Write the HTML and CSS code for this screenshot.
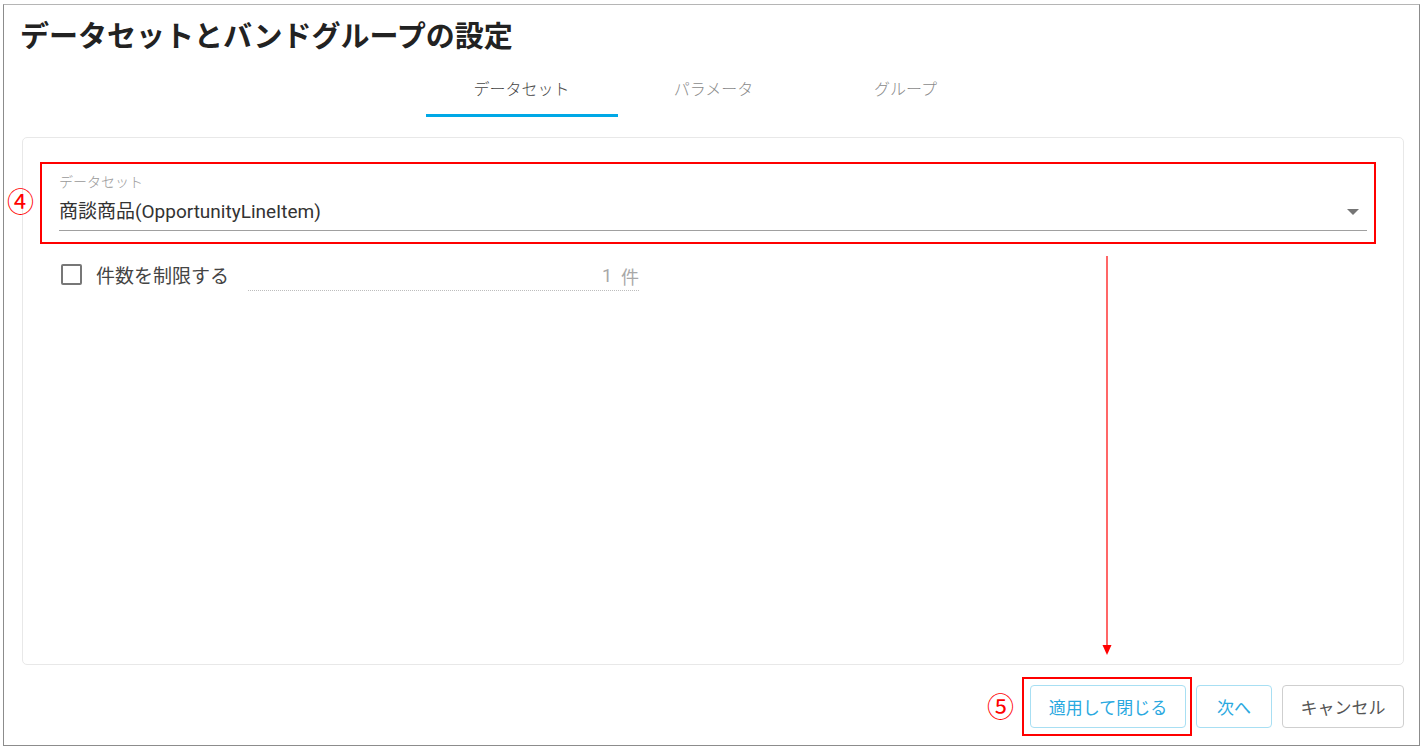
FILE: index.html
```html
<!DOCTYPE html>
<html lang="ja">
<head>
<meta charset="utf-8">
<title>データセットとバンドグループの設定</title>
<link rel="stylesheet" href="styles.css">
</head>
<body>
<div class="frame">
  <h1 class="title">データセットとバンドグループの設定</h1>
  <div class="tabs">
    <div class="tab active">データセット</div>
    <div class="tab">パラメータ</div>
    <div class="tab">グループ</div>
  </div>
  <div class="panel">
    <div class="mark-box field-box">
      <span class="num num-4">④</span>
      <div class="field">
        <div class="field-label">データセット</div>
        <div class="field-value">
          <span>商談商品(OpportunityLineItem)</span>
          <span class="caret"></span>
        </div>
      </div>
    </div>
    <div class="limit-row">
      <span class="checkbox"></span>
      <span class="limit-label">件数を制限する</span>
      <div class="limit-input"><span>1</span><span>件</span></div>
    </div>
  </div>
  <div class="footer">
    <span class="num num-5">⑤</span>
    <div class="mark-box btn-box">
      <button class="btn btn-primary">適用して閉じる</button>
    </div>
    <button class="btn btn-primary btn-next">次へ</button>
    <button class="btn btn-cancel">キャンセル</button>
  </div>
  <svg class="arrow" width="12" height="400" viewBox="0 0 12 400">
    <line x1="6" y1="0" x2="6" y2="392" stroke="#ff0000" stroke-width="1.2"/>
    <polygon points="1.5,389 10.5,389 6,399" fill="#ff0000"/>
  </svg>
</div>
</body>
</html>
```

FILE: styles.css
```css
* { box-sizing: border-box; }
html, body { margin: 0; padding: 0; background: #fff; }
body {
  font-family: Roboto, "Noto Sans CJK JP", sans-serif;
  color: #333;
}
.frame {
  position: relative;
  margin: 4px 0 0 3px;
  width: 1417px;
  height: 742px;
  border: 1px solid #8c8c8c;
  border-top-color: #b5b5b5;
  display: flex;
  flex-direction: column;
}
.title {
  margin: 0;
  padding: 12px 0 0 16px;
  height: 52px;
  line-height: 40px;
  font-size: 29px;
  font-weight: 700;
  color: #222;
}
.tabs {
  display: flex;
  justify-content: center;
  padding-left: 4px;
}
.tab {
  width: 192px;
  height: 60px;
  padding-top: 5px;
  display: flex;
  align-items: center;
  justify-content: center;
  font-size: 16px;
  font-weight: 300;
  color: #8a8a8a;
  border-bottom: 3px solid transparent;
}
.tab.active {
  color: #444;
  border-bottom-color: #00a8e6;
}
.panel {
  margin: 20px 15px 0 18px;
  height: 528px;
  border: 1px solid #e8e8e8;
  border-radius: 5px;
  padding: 24px 27px 0 17px;
}
.mark-box {
  border: 2px solid #ff0000;
}
.field-box {
  position: relative;
  padding: 9px 7px 11px 17px;
}
.num {
  position: absolute;
  color: #ff0000;
  font-family: "Noto Sans CJK JP", sans-serif;
  font-size: 27px;
  line-height: 28px;
}
.num-4 { left: -35px; top: 23px; }
.field-label {
  font-size: 14px;
  line-height: 18px;
  font-weight: 300;
  color: #999;
}
.field-value {
  margin-top: 9px;
  display: flex;
  align-items: center;
  justify-content: space-between;
  font-size: 19px;
  line-height: 24px;
  color: #333;
  padding-bottom: 6px;
  border-bottom: 1.5px solid #a0a0a0;
}
.caret {
  width: 0;
  height: 0;
  margin-right: 8px;
  border-left: 6px solid transparent;
  border-right: 6px solid transparent;
  border-top: 6px solid #757575;
}
.limit-row {
  display: flex;
  align-items: center;
  margin-top: 18px;
  margin-left: 21px;
  height: 24px;
}
.checkbox {
  width: 21px;
  height: 21px;
  border: 2px solid #777;
  border-radius: 2px;
}
.limit-label {
  margin-left: 14px;
  font-size: 19px;
  color: #444;
}
.limit-input {
  margin-left: 19px;
  width: 391px;
  height: 28px;
  display: flex;
  justify-content: flex-end;
  align-items: center;
  gap: 9px;
  font-size: 18px;
  color: #a8a8a8;
  border-bottom: 1px dotted #bdbdbd;
  margin-top: 6px;
  padding-bottom: 2px;
}
.footer {
  position: relative;
  display: flex;
  justify-content: flex-end;
  align-items: center;
  margin: 10px 15px 0 0;
  height: 62px;
}
.num-5 { position: static; margin-right: 8px; }
.btn-box {
  padding: 6px 4px 6px 6px;
  margin-right: 2px;
}
.btn {
  height: 43px;
  border-radius: 4px;
  background: #fff;
  font-family: Roboto, "Noto Sans CJK JP", sans-serif;
  font-size: 17px;
  padding: 0;
  cursor: pointer;
}
.btn-primary {
  width: 156px;
  border: 1px solid #a8dff3;
  color: #2aa9df;
}
.btn-next {
  width: 76px;
  margin-left: 2px;
}
.btn-cancel {
  width: 122px;
  margin-left: 10px;
  border: 1px solid #cfcfcf;
  color: #555;
}
.arrow {
  position: absolute;
  left: 1097px;
  top: 251px;
}
```
